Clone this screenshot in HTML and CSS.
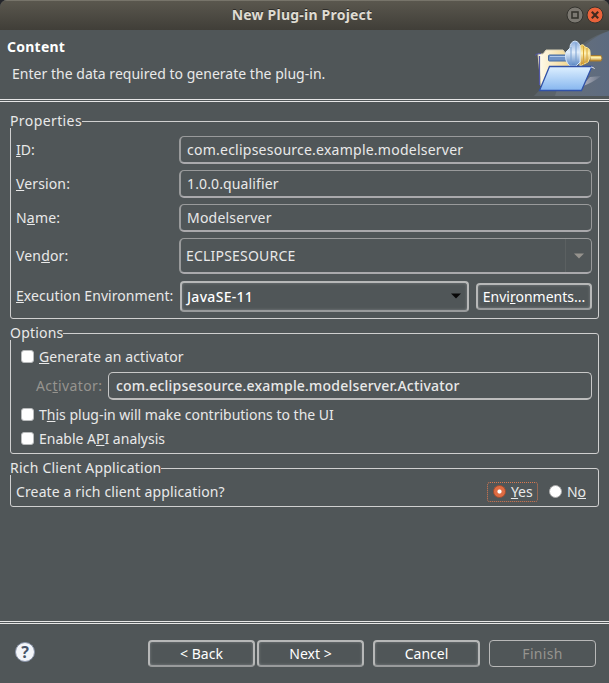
FILE: index.html
```html
<!DOCTYPE html>
<html lang="en">
<head>
<meta charset="utf-8">
<title>New Plug-in Project</title>
<link rel="stylesheet" href="styles.css">
</head>
<body>
<div class="window">
  <header class="titlebar">
    <span></span>
    <h1 class="t-title">New Plug-in Project</h1>
    <div class="controls">
      <svg width="18" height="18" viewBox="0 0 18 18"><circle cx="9" cy="9" r="8" fill="#7b7871" stroke="#35342f"/><rect x="6" y="6" width="6" height="6" fill="none" stroke="#35342d" stroke-width="1.6"/></svg>
      <svg width="18" height="18" viewBox="0 0 18 18"><circle cx="9" cy="9" r="8" fill="#e9623a" stroke="#35342f"/><path d="M5.800 5.800l6.400 6.400M12.200 5.800l-6.400 6.400" stroke="#42291f" stroke-width="2.200"/></svg>
    </div>
  </header>

  <section class="banner">
    <div>
      <h2 class="t-content">Content</h2>
      <p class="t-desc">Enter the data required to generate the plug-in.</p>
    </div>
    <svg class="art" width="76" height="66" viewBox="533 30 76 66">
      <defs>
        <linearGradient id="sky" x1="0" y1="0" x2="1" y2="0"><stop offset="0" stop-color="#687078"/><stop offset="1" stop-color="#5d6b80"/></linearGradient>
        <linearGradient id="folder" x1="0" y1="0" x2="0" y2="1"><stop offset="0" stop-color="#def0ff"/><stop offset="1" stop-color="#86b6ef"/></linearGradient>
        <linearGradient id="paper" x1="0" y1="0" x2="1" y2="0"><stop offset="0" stop-color="#fffdf0"/><stop offset="1" stop-color="#f1cf7d"/></linearGradient>
        <linearGradient id="blue" x1="0" y1="0" x2="0" y2="1"><stop offset="0" stop-color="#86a9dc"/><stop offset=".45" stop-color="#e4effb"/><stop offset="1" stop-color="#5583c0"/></linearGradient>
        <linearGradient id="gold" x1="0" y1="0" x2="0" y2="1"><stop offset="0" stop-color="#e7bc45"/><stop offset=".4" stop-color="#fff3b9"/><stop offset="1" stop-color="#b9801f"/></linearGradient>
        <linearGradient id="shade" x1="0" y1="0" x2="1" y2="0"><stop offset="0" stop-color="#b7b7c4"/><stop offset="1" stop-color="#b7b7c4" stop-opacity=".1"/></linearGradient>
      </defs>
      <path d="M534 96C556 74 574 40 609 31V96Z" fill="#5b636a"/>
      <path d="M555 96C563 68 582 40 609 31V96Z" fill="url(#sky)"/>
      <path d="M581 87L590 77L601 76Q594 82 581 87Z" fill="url(#shade)"/>
      <path d="M538 54H543L546 50H563L566 54H575V78L541 86Z" fill="url(#paper)" stroke="#ddd4b8"/>
      <path d="M535.500 55.500Q536 53.500 541 53.500M539.500 56V85" fill="none" stroke="#5257a4" stroke-width="1.200"/>
      <rect x="548.500" y="55" width="19" height="6" rx="1" fill="#6f93c7" stroke="#456a9f"/>
      <path d="M550 56.500H567" stroke="#b0c9eb"/>
      <path d="M590 55.500H601Q603 58 601 61H590Z" fill="url(#gold)" stroke="#a57a31"/>
      <path d="M580 46Q583 43 585 47Q590 48 590 52Q591 57 588 62L580 66Z" fill="url(#gold)" stroke="#ffe89a"/>
      <path d="M583.500 46V65M587 48V63" stroke="#d9a734"/>
      <path d="M566 52L570 48Q570 42 575 41Q580 42 580 48V62L576 66H570Q564 61 566 52Z" fill="url(#blue)" stroke="#d6e8fc"/>
      <path d="M571 47V65M576 43V65" stroke="#7ba1d2"/>
      <path d="M549.500 66.500H592L581.500 90.500H539.500Z" fill="url(#folder)" stroke="#3152a8" stroke-width="1.300"/>
      <path d="M591 67Q594 67 594.500 69" fill="none" stroke="#e4e5ee"/>
    </svg>
  </section>
  <div class="rule"></div>

  <main class="page">
    <fieldset class="group properties">
      <legend class="t-properties">Properties</legend>
      <div class="grid">
        <label class="t-id"><u>I</u>D:</label><div class="field"><span class="t-idval">com.eclipsesource.example.modelserver</span></div>
        <label class="t-version"><u>V</u>ersion:</label><div class="field"><span class="t-verval">1.0.0.qualifier</span></div>
        <label class="t-name">N<u>a</u>me:</label><div class="field"><span class="t-nameval">Modelserver</span></div>
        <label class="t-vendor">Ven<u>d</u>or:</label>
        <div class="field vendor"><span class="t-vendval">ECLIPSESOURCE</span><i class="drop"><svg width="10" height="6" viewBox="0 0 10 6"><path d="M0 .5H10L5 5.500Z" fill="#96938e"/></svg></i></div>
        <label class="t-exec"><u>E</u>xecution Environment:</label>
        <div class="envrow">
          <div class="button combo"><span class="t-java">JavaSE-11</span><svg width="10" height="6" viewBox="0 0 10 6"><path d="M0 .5H10L5 5.500Z" fill="#080808"/></svg></div>
          <div class="button env"><span class="t-env">Envi<u>r</u>onments...</span></div>
        </div>
      </div>
    </fieldset>

    <fieldset class="group options">
      <legend class="t-options">Options</legend>
      <div class="check first"><i class="box"></i><span class="t-gen"><u>G</u>enerate an activator</span></div>
      <div class="activator"><label class="t-act">Ac<u>t</u>ivator:</label><div class="field bright"><span class="t-actval">com.eclipsesource.example.modelserver.Activator</span></div></div>
      <div class="check"><i class="box"></i><span class="t-ui">T<u>h</u>is plug-in will make contributions to the UI</span></div>
      <div class="check"><i class="box"></i><span class="t-api">Enable A<u>P</u>I analysis</span></div>
    </fieldset>

    <fieldset class="group rich">
      <legend class="t-rich">Rich Client Application</legend>
      <div class="question">
        <span class="t-create">Create a rich client application?</span>
        <div class="radios">
          <div class="radio focus"><i class="dot on"></i><span class="t-yes"><u>Y</u>es</span></div>
          <div class="radio"><i class="dot"></i><span class="t-no">N<u>o</u></span></div>
        </div>
      </div>
    </fieldset>
  </main>

  <div class="rule"></div>
  <footer class="footer">
    <div class="help"><span>?</span></div>
    <div class="actions">
      <div class="button"><span class="t-back">&lt; Back</span></div>
      <div class="button"><span class="t-next">Next &gt;</span></div>
      <div class="button cancel"><span class="t-cancel">Cancel</span></div>
      <div class="button disabled"><span class="t-finish">Finish</span></div>
    </div>
  </footer>
</div>
</body>
</html>
```
FILE: styles.css
```css
* { box-sizing: border-box; }
html { background: #24252a; }
body { margin: 0; width: 609px; height: 683px; overflow: hidden; font: 14px/16px "Noto Sans", "Open Sans", sans-serif; color: #e9e9e9; }
h1, h2, p, fieldset, legend { margin: 0; padding: 0; }
i { display: block; }
svg { display: block; flex: none; }
span, label, legend, h1, h2, p { white-space: nowrap; }
u { text-decoration: underline 1px; text-underline-offset: 1px; text-decoration-skip-ink: none; }
.window { width: 609px; height: 683px; background: #505658; border-radius: 7px 7px 0 0; overflow: hidden; display: flex; flex-direction: column; }

.titlebar { height: 30px; flex: none; display: grid; grid-template-columns: 1fr auto 1fr; align-items: center; padding: 0 5px 1px 0; background: linear-gradient(#5a574e, #403e38); border-top: 1px solid #77746a; }
.titlebar h1 { font-size: 14px; line-height: 18px; font-weight: 700; color: #dfdbd2; text-shadow: 0 -1px #2c2b28; }
.controls { display: flex; gap: 2px; justify-content: flex-end; }

.banner { height: 69px; flex: none; display: flex; justify-content: space-between; padding-left: 7px; }
.banner h2 { font-size: 14px; line-height: 18px; margin-top: 8px; font-weight: 700; color: #fff; }
.banner p { margin: 10px 0 0 5px; }
.rule { height: 3px; flex: none; border: solid #e6e6e6; border-width: 1px 0; }

.page { height: 519px; flex: none; padding: 12px 10px 0; }
.group { border: 1px solid #d0d0d0; border-radius: 3px; min-width: 0; }
.group legend { margin-left: -1px; height: 14px; line-height: 14px; }
.properties { height: 205px; margin-bottom: 7px; }
.options { height: 128px; margin-bottom: 7px; }
.rich { height: 46px; }

.grid { display: grid; grid-template-columns: 163px 413px; grid-template-rows: 28px 28px 28px 36px 31px; row-gap: 6px; align-items: center; padding: 8px 0 0 5px; }
.field { height: 28px; display: flex; align-items: center; border: 1px solid #999a9b; border-left-width: 2px; border-bottom: 2px solid #aaa9ac; border-radius: 5px; padding-left: 6px; }
.vendor { height: 36px; justify-content: space-between; padding-left: 5px; }
.drop { height: 100%; width: 26px; display: flex; align-items: center; justify-content: center; border-left: 1px solid #5b6061; }
.envrow { display: flex; justify-content: space-between; align-items: center; margin-top: 1px; padding-left: 1px; }
.button { width: 107px; height: 27px; display: flex; align-items: center; justify-content: center; border: 2px solid #b7b8b8; border-bottom-color: #999b9c; border-radius: 4px; box-shadow: inset 0 0 3px #7c8182; color: #fff; }
.combo { width: 289px; height: 31px; justify-content: space-between; padding: 0 6px 0 5px; }
.env { width: 116px; }
.properties .t-exec, .properties .combo span, .properties .env span { padding-top: 1px; }

.check { display: flex; align-items: center; gap: 5px; height: 24px; padding-left: 10px; }
.check .box { margin-top: -1px; }
.first { margin-top: 5px; height: 24px; }
.box { width: 13px; height: 13px; border-radius: 3px; background: #fff; border: 1px solid #b9bbbc; }
.activator { display: flex; align-items: center; justify-content: space-between; margin: 3px 6px 3px 25px; }
.activator label { color: #96948f; }
.activator .field { width: 484px; }
.activator .bright { border: 1px solid #c8c8c8; border-bottom: 2px solid #bdbdbd; padding-left: 7px; }

.question { display: flex; align-items: center; justify-content: space-between; margin-top: 7px; padding: 0 12px 0 5px; height: 20px; }
.radios { display: flex; align-items: center; gap: 11px; }
.radio { display: flex; align-items: center; gap: 5px; height: 20px; }
.focus { width: 51px; border: 1px dotted #db794f; border-radius: 3px; padding-left: 5px; }
.dot { width: 13px; height: 13px; border-radius: 50%; background: #fff; border: 1px solid #aaa; margin-top: -1px; }
.on { background: radial-gradient(circle, #fff 0 1.600px, #df6c43 2.500px); border-color: #a84f30; }

.footer { flex: 1; display: flex; justify-content: space-between; padding: 16px 13px 0 15px; }
.help { width: 20px; height: 20px; margin-top: 2px; border-radius: 50%; background: #f3f5f9; border: 1px solid #8792a8; display: flex; align-items: center; justify-content: center; color: #475468; font-size: 16px; font-weight: 700; }
.actions { display: flex; gap: 2px; }
.actions .cancel { margin: 0 7px; }
.actions .disabled { border: 1px solid #b8b8b8; box-shadow: none; color: #96948f; }

.t-title { letter-spacing: .22px; }
.t-content { letter-spacing: .25px; }
.t-desc { letter-spacing: .02px; }
.t-properties { letter-spacing: .4px; }
.t-options { letter-spacing: .2px; }
.t-rich { letter-spacing: .22px; }
.t-create { letter-spacing: .13px; }
.t-idval { letter-spacing: .24px; }
.t-version, .t-verval { letter-spacing: .13px; }
.t-name { letter-spacing: .2px; }
.t-vendor { letter-spacing: .15px; }
.t-nameval, .t-vendval { letter-spacing: .2px; }
.t-exec { letter-spacing: .07px; }
.t-java { letter-spacing: .3px; font-weight: 500; }
.t-gen { letter-spacing: .12px; }
.t-act { letter-spacing: .4px; }
.t-actval { letter-spacing: .2px; font-weight: 500; }
.t-finish { letter-spacing: .3px; }
```
